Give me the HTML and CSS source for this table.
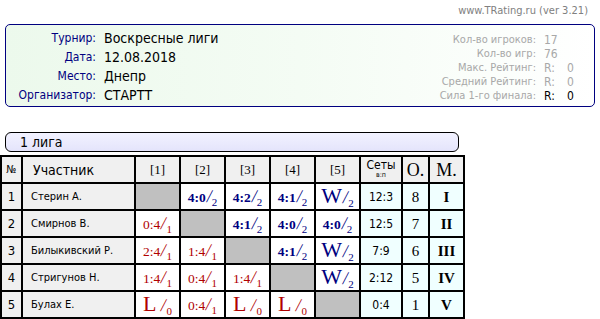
FILE: index.html
```html
<!DOCTYPE html>
<html>
<head>
<meta charset="utf-8">
<link rel="stylesheet" href="styles.css">
</head>
<body>
<div class="site">www.TRating.ru (ver 3.21)</div>
<div class="info">
  <div class="info-left">
    <span class="lab">Турнир:</span><span class="val">Воскресные лиги</span>
    <span class="lab">Дата:</span><span class="val">12.08.2018</span>
    <span class="lab">Место:</span><span class="val">Днепр</span>
    <span class="lab">Организатор:</span><span class="val">СТАРТТ</span>
  </div>
  <div class="info-right">
    <span class="rlab">Кол-во игроков:</span><span class="rval">17</span><span></span>
    <span class="rlab">Кол-во игр:</span><span class="rval">76</span><span></span>
    <span class="rlab">Макс. Рейтинг:</span><span class="rval">R:</span><span class="rval">0</span>
    <span class="rlab">Средний Рейтинг:</span><span class="rval">R:</span><span class="rval">0</span>
    <span class="rlab">Сила 1-го финала:</span><span class="rval dark">R:</span><span class="rval dark">0</span>
  </div>
</div>
<div class="league">1 лига</div>
<table class="grid">
  <thead>
    <tr>
      <th class="c-no">№</th>
      <th class="c-name">Участник</th>
      <th class="c-r">[1]</th>
      <th class="c-r">[2]</th>
      <th class="c-r">[3]</th>
      <th class="c-r">[4]</th>
      <th class="c-r">[5]</th>
      <th class="c-sets">Сеты<span class="vp">в:п</span></th>
      <th class="c-o">O.</th>
      <th class="c-m">M.</th>
    </tr>
  </thead>
  <tbody>
    <tr>
      <td class="no">1</td><td class="name">Стерин А.</td>
      <td class="self"></td>
      <td class="win"><b>4:0</b><i>/</i><sub>2</sub></td>
      <td class="win"><b>4:2</b><i>/</i><sub>2</sub></td>
      <td class="win"><b>4:1</b><i>/</i><sub>2</sub></td>
      <td class="win"><em>W</em><i>/</i><sub>2</sub></td>
      <td class="sets">12:3</td><td class="pts">8</td><td class="place">I</td>
    </tr>
    <tr>
      <td class="no">2</td><td class="name">Смирнов В.</td>
      <td class="loss"><b>0:4</b><i>/</i><sub>1</sub></td>
      <td class="self"></td>
      <td class="win"><b>4:1</b><i>/</i><sub>2</sub></td>
      <td class="win"><b>4:0</b><i>/</i><sub>2</sub></td>
      <td class="win"><b>4:0</b><i>/</i><sub>2</sub></td>
      <td class="sets">12:5</td><td class="pts">7</td><td class="place">II</td>
    </tr>
    <tr>
      <td class="no">3</td><td class="name">Билыкивский Р.</td>
      <td class="loss"><b>2:4</b><i>/</i><sub>1</sub></td>
      <td class="loss"><b>1:4</b><i>/</i><sub>1</sub></td>
      <td class="self"></td>
      <td class="win"><b>4:1</b><i>/</i><sub>2</sub></td>
      <td class="win"><em>W</em><i>/</i><sub>2</sub></td>
      <td class="sets">7:9</td><td class="pts">6</td><td class="place">III</td>
    </tr>
    <tr>
      <td class="no">4</td><td class="name">Стригунов Н.</td>
      <td class="loss"><b>1:4</b><i>/</i><sub>1</sub></td>
      <td class="loss"><b>0:4</b><i>/</i><sub>1</sub></td>
      <td class="loss"><b>1:4</b><i>/</i><sub>1</sub></td>
      <td class="self"></td>
      <td class="win"><em>W</em><i>/</i><sub>2</sub></td>
      <td class="sets">2:12</td><td class="pts">5</td><td class="place">IV</td>
    </tr>
    <tr>
      <td class="no">5</td><td class="name">Булах Е.</td>
      <td class="loss"><em>L</em> <i>/</i><sub>0</sub></td>
      <td class="loss"><b>0:4</b><i>/</i><sub>1</sub></td>
      <td class="loss"><em>L</em> <i>/</i><sub>0</sub></td>
      <td class="loss"><em>L</em> <i>/</i><sub>0</sub></td>
      <td class="self"></td>
      <td class="sets">0:4</td><td class="pts">1</td><td class="place">V</td>
    </tr>
  </tbody>
</table>
</body>
</html>
```
FILE: styles.css
```css
html, body {
  margin: 0;
  padding: 0;
  background: #fff;
  font-family: "DejaVu Sans Condensed", "Liberation Sans", sans-serif;
}
.site {
  height: 24px;
  line-height: 22px;
  text-align: right;
  padding-right: 12px;
  font-size: 11px;
  color: #808080;
}
.info {
  margin: 0 5px;
  height: 81px;
  border: 1px solid #000080;
  border-radius: 5px;
  background: linear-gradient(to right, #ecf9ec 0%, #f4fcf4 50%, #ffffff 100%);
  display: flex;
  justify-content: space-between;
  align-items: center;
}
.info-left {
  display: grid;
  grid-template-columns: 90px auto;
  column-gap: 8px;
  grid-auto-rows: 19px;
  align-items: center;
  margin-top: 1px;
}
.lab {
  text-align: right;
  font-size: 12px;
  color: #000080;
}
.val {
  font-size: 14px;
  color: #000;
}
.info-right {
  display: grid;
  grid-template-columns: auto 15px 10px;
  column-gap: 8px;
  grid-auto-rows: 14px;
  align-items: center;
  margin-right: 17px;
  margin-top: 4px;
}
.rlab {
  text-align: right;
  font-size: 11px;
  color: #a8a8a8;
}
.rval {
  font-size: 12px;
  color: #a8a8a8;
}
.rval.dark { color: #000; }
.league {
  margin: 25px 0 0 5px;
  width: 438px;
  height: 18px;
  line-height: 18px;
  padding-left: 14px;
  border: 1px solid #000;
  border-radius: 6px;
  background: linear-gradient(to bottom, #f2f2ff, #e4e4fb);
  font-size: 14px;
  color: #000;
}
.grid {
  margin-top: 3px;
  border-collapse: separate;
  border-spacing: 0;
  border: 1px solid #000;
  table-layout: fixed;
}
.grid th, .grid td {
  border: 1px solid #000;
  padding: 0;
  height: 25px;
  line-height: 16px;
  text-align: center;
  vertical-align: middle;
  overflow: hidden;
}
.grid th {
  background: #f0f0f0;
  font-weight: normal;
}
.grid th.c-no { width: 19px; font-size: 11px; }
.grid th.c-name { width: 101px; font-size: 14px; text-align: left; padding-left: 10px; }
.grid th.c-r { width: 43px; font-family: "Liberation Serif", serif; font-size: 13px; }
.grid th.c-sets { width: 40px; font-size: 12px; line-height: 11px; }
.vp { display: block; font-size: 7px; line-height: 8px; }
.grid th.c-o, .grid th.c-m { font-family: "Liberation Serif", serif; font-size: 18px; }
.grid th.c-o { width: 25px; }
.grid th.c-m { width: 33px; }
td.no { background: #f0f0f0; font-size: 13px; }
.grid td.name {
  background: #f0f0f0;
  text-align: left;
  padding-left: 8px;
  font-size: 11px;
  white-space: nowrap;
}
td.self { background: #c0c0c0; }
td.win, td.loss {
  background: #fff;
  font-family: "Liberation Serif", serif;
  white-space: nowrap;
}
td.win { color: #000080; }
td.loss { color: #b00000; }
td.win b { font-size: 13.5px; font-weight: bold; }
td.loss b { font-size: 13.5px; font-weight: normal; }
td i {
  font-style: normal;
  font-size: 18px;
  line-height: 16px;
  display: inline-block;
  transform: skewX(-10deg);
  margin-left: 1px;
}
td sub {
  font-size: 11px;
  line-height: 0;
  vertical-align: -4px;
}
td em {
  font-style: normal;
  font-size: 22px;
  line-height: 16px;
}
td.sets, td.pts, td.place { background: #f0ffff; }
td.sets { font-size: 12px; }
td.pts { font-family: "Liberation Serif", serif; font-size: 15px; }
td.place { font-family: "Liberation Serif", serif; font-size: 15px; font-weight: bold; }
```
